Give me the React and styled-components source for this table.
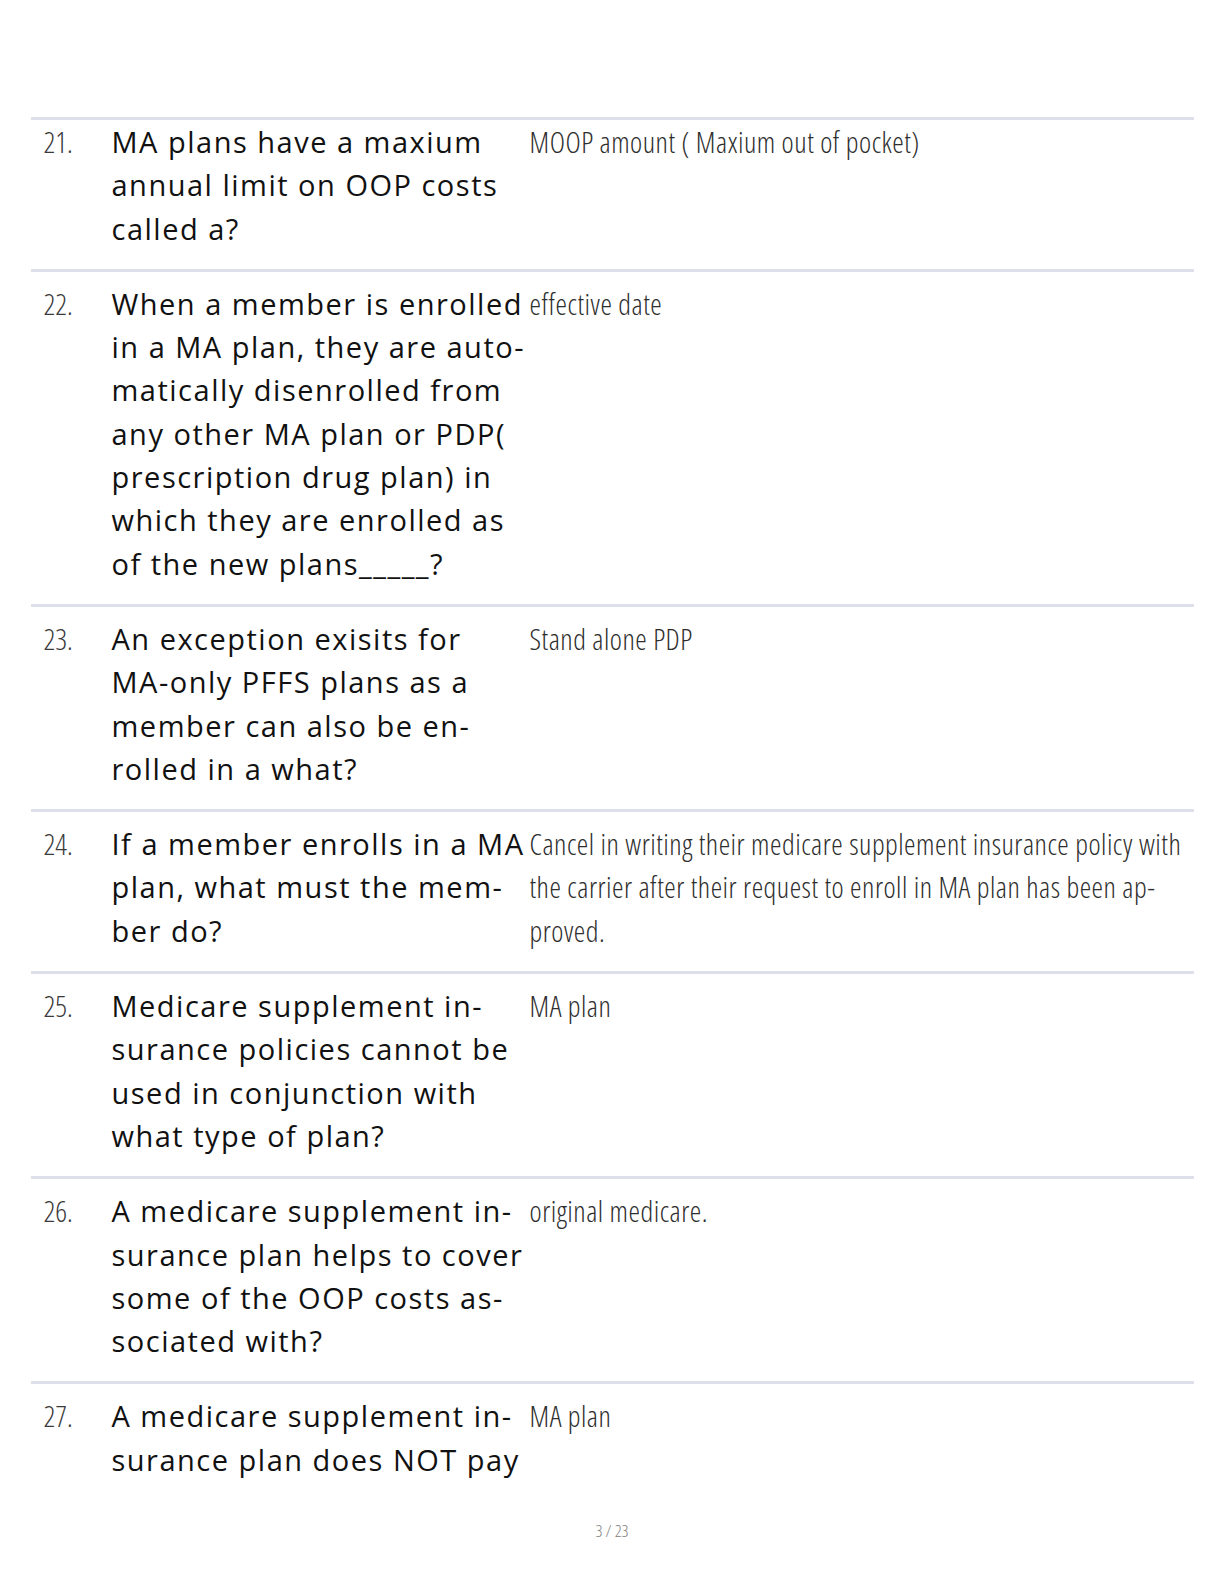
import React from 'react';
import styled, { createGlobalStyle } from 'styled-components';

const GlobalStyle = createGlobalStyle`
    html, body {
        margin: 0;
        padding: 0;
        background: #ffffff;
    }
`;

const cards = [
    {
        num: '21.',
        question: 'MA plans have a maxium annual limit on OOP costs called a?',
        answer: 'MOOP amount ( Maxium out of pocket)',
    },
    {
        num: '22.',
        question:
            'When a member is enrolled in a MA plan, they are auto\u00ADmatically disenrolled from any other MA plan or PDP( prescription drug plan) in which they are enrolled as of the new plans_____?',
        answer: 'effective date',
    },
    {
        num: '23.',
        question: 'An exception exisits for MA-\u2060only PFFS plans as a member can also be en\u00ADrolled in a what?',
        answer: 'Stand alone PDP',
    },
    {
        num: '24.',
        question: 'If a member enrolls in a MA plan, what must the mem\u00ADber do?',
        answer:
            'Cancel in writing their medicare supplement insurance policy with the carrier after their request to enroll in MA plan has been ap\u00ADproved.',
    },
    {
        num: '25.',
        question: 'Medicare supplement in\u00ADsurance policies cannot be used in conjunction with what type of plan?',
        answer: 'MA plan',
    },
    {
        num: '26.',
        question: 'A medicare supplement in\u00ADsurance plan helps to cover some of the OOP costs as\u00ADsociated with?',
        answer: 'original medicare.',
    },
    {
        num: '27.',
        question: 'A medicare supplement in\u00ADsurance plan does NOT pay',
        answer: 'MA plan',
    },
];

const Page = styled.div`
    width: 1224px;
    height: 1584px;
    display: flex;
    flex-direction: column;
    align-items: center;
    overflow: hidden;
`;

const Table = styled.div`
    margin-top: 117px;
    width: 1163px;
    display: flex;
    flex-direction: column;
`;

const Row = styled.div`
    display: grid;
    grid-template-columns: 81px 418px 1fr;
    border-top: 3px solid #dde0e9;
    padding: ${({ first }) => (first ? '0' : '10px')} 0 19px 0;
`;

const Num = styled.div`
    padding-left: 13px;
    font-family: 'Open Sans', sans-serif;
    font-weight: 300;
    font-stretch: 75%;
    font-size: 29px;
    line-height: 43.3px;
    color: #3a3a3a;
`;

const Question = styled.div`
    padding-right: 4px;
    font-family: 'Open Sans', sans-serif;
    font-size: 29px;
    letter-spacing: 1.5px;
    line-height: 43.3px;
    color: #111111;
    hyphens: manual;
`;

const Answer = styled.div`
    padding-right: 10px;
    font-family: 'Open Sans', sans-serif;
    font-weight: 300;
    font-stretch: 75%;
    font-size: 29px;
    letter-spacing: 0.5px;
    line-height: 43.3px;
    color: #2e2e2e;
    hyphens: manual;
`;

const Footer = styled.div`
    margin-top: 19px;
    font-family: 'Open Sans', sans-serif;
    font-weight: 300;
    font-stretch: 75%;
    font-size: 17px;
    color: #808080;
`;

const App = () => {
    return (
        <Page>
            <GlobalStyle />
            <Table>
                {cards.map((card, index) => (
                    <Row key={card.num} first={index === 0 ? 1 : 0}>
                        <Num>{card.num}</Num>
                        <Question>{card.question}</Question>
                        <Answer>{card.answer}</Answer>
                    </Row>
                ))}
            </Table>
            <Footer>3 / 23</Footer>
        </Page>
    );
};

export default App;
